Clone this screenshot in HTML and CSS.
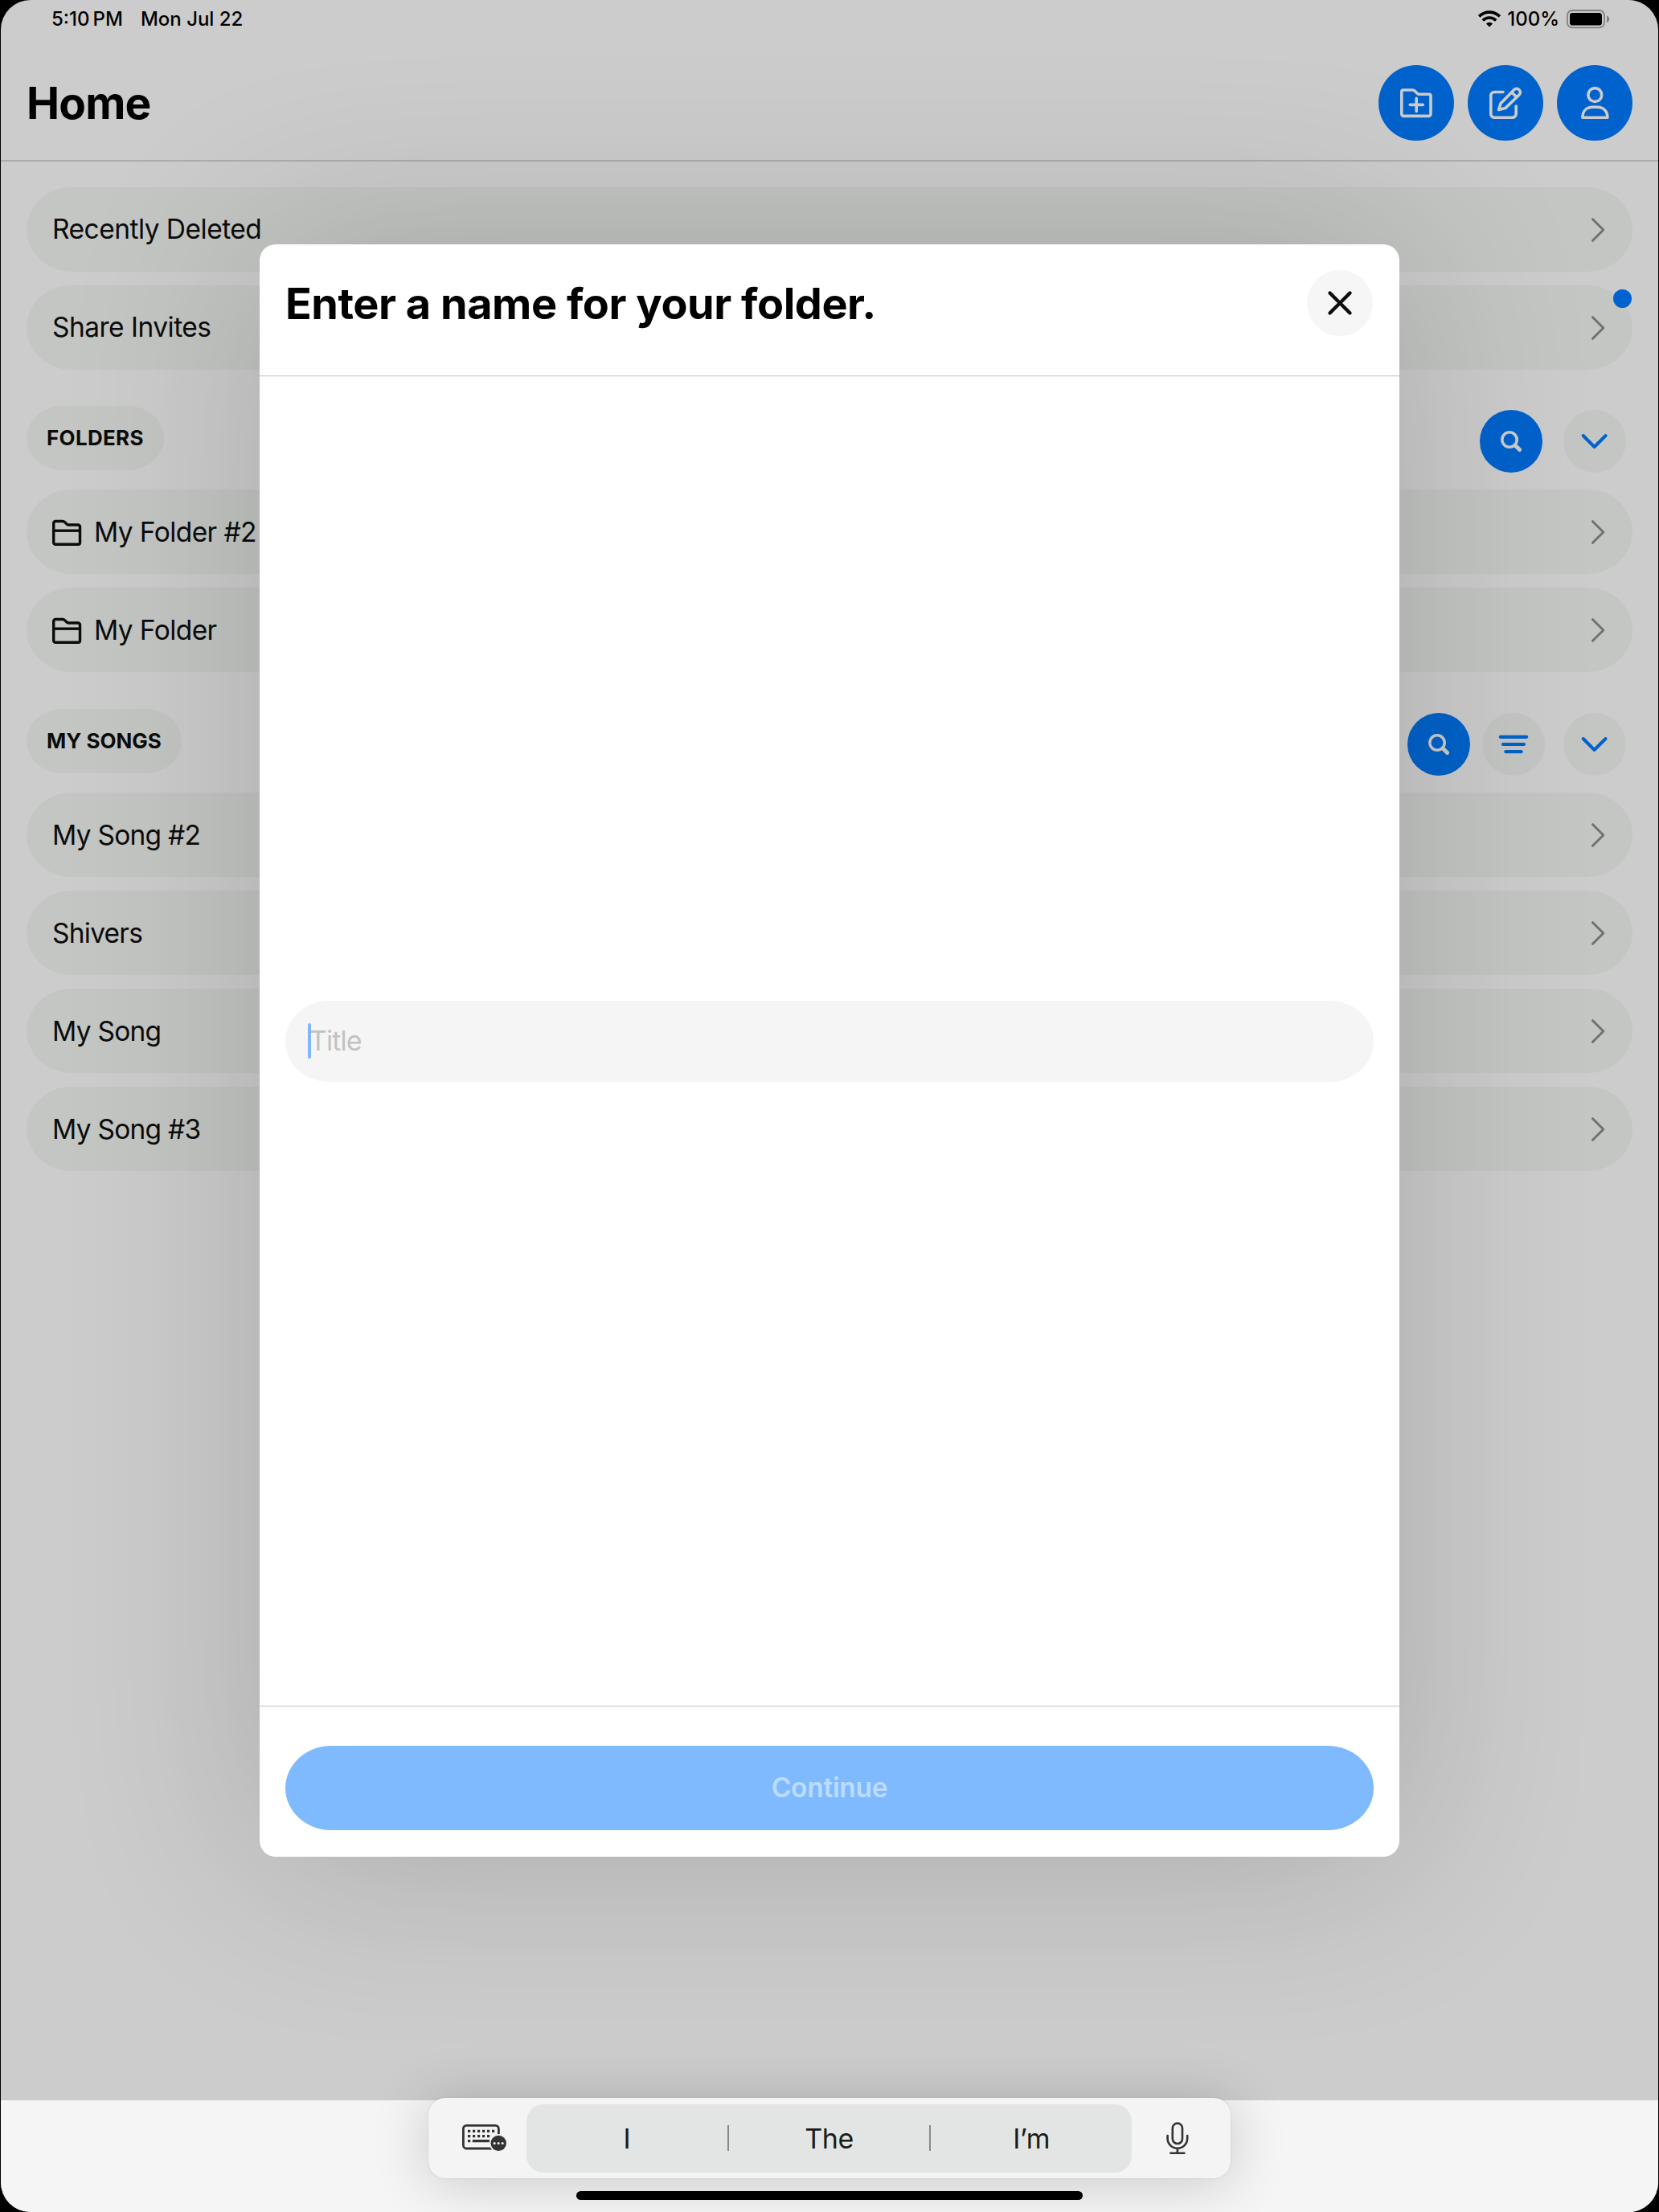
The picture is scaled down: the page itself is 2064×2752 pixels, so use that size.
FILE: index.html
```html
<!DOCTYPE html>
<html lang="en">
<head>
<meta charset="utf-8">
<title>Home</title>
<link rel="stylesheet" href="styles.css">
</head>
<body>
<svg class="defs" aria-hidden="true">
  <symbol id="chev" viewBox="0 0 20 34"><path d="M3.5 3.7 L16.8 17 L3.5 30.3" fill="none" stroke="#707175" stroke-width="3" stroke-linecap="round" stroke-linejoin="round"/></symbol>
  <symbol id="down" viewBox="0 0 78 78"><path d="M24.7 32 L38.6 46 L52.6 32" fill="none" stroke="#0062cc" stroke-width="4" stroke-linecap="round" stroke-linejoin="round"/></symbol>
  <symbol id="search" viewBox="0 0 78 78"><g fill="none" stroke="currentColor"><circle cx="37" cy="37" r="9.2" stroke-width="3.6"/><path d="M44.5 44.5 L49.6 49.6" stroke-width="5" stroke-linecap="round"/></g></symbol>
  <symbol id="folder" viewBox="0 0 38 34"><g fill="none" stroke="#0b0c0b" stroke-width="3.4" stroke-linejoin="round"><path d="M2.7 5 a2.5 2.5 0 0 1 2.5 -2.5 H14 q1.5 0 2.6 1.1 l2.2 2.2 q1 1.2 2.5 1.2 H33 a2.5 2.5 0 0 1 2.5 2.5 V29 a2.3 2.3 0 0 1 -2.3 2.3 H5 A2.3 2.3 0 0 1 2.7 29 Z"/><path d="M3 14.2 H35"/></g></symbol>
</svg>
<div class="screen">
  <div class="statusbar">
    <span class="clock">5:10<i class="thin"></i>PM</span><span class="date">Mon Jul 22</span>
    <svg class="wifi" viewBox="0 0 28 21"><g fill="none" stroke="#000" stroke-width="3.6"><path d="M1.2 7.4 A18.2 18.2 0 0 1 26.8 7.4"/><path d="M5.8 12.4 A11.6 11.6 0 0 1 22.2 12.4"/></g><path d="M14 20.4 L9.9 16.4 A5.8 5.8 0 0 1 18.1 16.4 Z"/></svg>
    <span class="percent">100%</span>
    <svg class="battery" viewBox="0 0 54 24"><rect x="1" y="1" width="46" height="21.4" rx="6" fill="none" stroke="#828282" stroke-width="1.8"/><rect x="4" y="4" width="40" height="15.6" rx="3.4"/><path d="M50 7.5 a5 4.6 0 0 1 0 8.6 Z" fill="#828282"/></svg>
  </div>
  <header class="topbar">
    <h1 class="home">Home</h1>
    <div class="tools">
      <span class="tool"><svg viewBox="0 0 94 94"><path d="M28.8 33 a2 2 0 0 1 2 -2 H42.5 q1.5 0 2.5 1 l3.3 3.2 q1 1 2.5 1 H63 a2 2 0 0 1 2 2 V61 a2.4 2.4 0 0 1 -2.4 2.4 H31.2 A2.4 2.4 0 0 1 28.8 61 Z M39.3 49.4 H55.3 M47.2 41.4 V57.4"/></svg></span>
      <span class="tool"><svg viewBox="0 0 94 94"><path d="M44 33.5 H33.3 a4.5 4.5 0 0 0 -4.5 4.5 V60.5 a4.8 4.8 0 0 0 4.8 4.8 H55.4 a4.8 4.8 0 0 0 4.8 -4.8 V51 M38.6 55.6 L41 47.8 L57.6 30.7 a4.5 4.5 0 0 1 6.4 6.4 L46.8 53.6 Z M54.8 33.8 L60.4 39.6"/></svg></span>
      <span class="tool"><svg viewBox="0 0 94 94"><circle cx="47.3" cy="37" r="8.4"/><path d="M31.9 65.2 C31.9 57 37 52.3 44.5 52.3 H50.2 C57.7 52.3 62.9 57 62.9 65.2 Z"/></svg></span>
    </div>
  </header>
  <main class="list">
    <div class="row"><span class="label">Recently Deleted</span><svg class="chev"><use href="#chev"/></svg></div>
    <div class="row"><span class="label">Share Invites</span><svg class="chev"><use href="#chev"/></svg><b class="dot"></b></div>
    <div class="section">
      <h2 class="pill pill-folders">FOLDERS</h2>
      <div class="actions"><span class="round blue"><svg><use href="#search"/></svg></span><span class="round wide"><svg><use href="#down"/></svg></span></div>
    </div>
    <div class="row"><svg class="folder"><use href="#folder"/></svg><span>My Folder #2</span><svg class="chev"><use href="#chev"/></svg></div>
    <div class="row"><svg class="folder"><use href="#folder"/></svg><span>My Folder</span><svg class="chev"><use href="#chev"/></svg></div>
    <div class="section songs">
      <h2 class="pill">MY SONGS</h2>
      <div class="actions"><span class="round blue"><svg><use href="#search"/></svg></span><span class="round sort"><svg viewBox="0 0 78 78"><path d="M22.8 29.8 H55.2 M26 39 H52 M29.4 48.2 H48.6" fill="none" stroke="#0062cc" stroke-width="4.2" stroke-linecap="round"/></svg></span><span class="round last"><svg><use href="#down"/></svg></span></div>
    </div>
    <div class="row song"><span>My Song #2</span><svg class="chev"><use href="#chev"/></svg></div>
    <div class="row song"><span>Shivers</span><svg class="chev"><use href="#chev"/></svg></div>
    <div class="row song"><span>My Song</span><svg class="chev"><use href="#chev"/></svg></div>
    <div class="row song"><span>My Song #3</span><svg class="chev"><use href="#chev"/></svg></div>
  </main>

  <section class="modal">
    <header class="modal-head">
      <h2 class="modal-title">Enter a name for your folder.</h2>
      <span class="close"><svg viewBox="0 0 82 82"><path d="M28.5 28.5 L53.5 53.5 M53.5 28.5 L28.5 53.5" stroke="#0b0c0b" stroke-width="4.4" stroke-linecap="round"/></svg></span>
    </header>
    <div class="modal-body"><div class="field"><i class="caret"></i><span class="placeholder">Title</span></div></div>
    <footer class="modal-foot"><div class="continue">Continue</div></footer>
  </section>

  <div class="keyboard">
    <div class="bar">
      <svg class="kbd" viewBox="0 0 56 36"><rect x="1.4" y="2.4" width="44" height="28.6" rx="4" fill="none" stroke="#333" stroke-width="2.8"/><path d="M7 9.4 H42 M7 15.6 H36" stroke="#333" stroke-width="3.4" stroke-dasharray="3.2 2.8"/><path d="M7 21.6 H10.2 M12.8 21.6 H34" stroke="#333" stroke-width="3.2"/><circle cx="45.2" cy="24.4" r="11.4" fill="#f3f3f3"/><circle cx="45.2" cy="24.4" r="9.7" fill="#333"/><g fill="#f3f3f3"><circle cx="40.2" cy="24.4" r="1.5"/><circle cx="45.2" cy="24.4" r="1.5"/><circle cx="50.2" cy="24.4" r="1.5"/></g></svg>
      <div class="words"><span class="word">I</span><i class="sep"></i><span class="word">The</span><i class="sep"></i><span class="word">I’m</span></div>
      <svg class="mic" viewBox="0 0 28 42"><g fill="none" stroke="#333" stroke-width="2.6" stroke-linecap="round"><rect x="7.8" y="1.6" width="12.2" height="25.4" rx="6.1"/><path d="M1.6 17 V20.5 a12.3 12.3 0 0 0 24.6 0 V17 M13.9 33 V38.6 M5.4 38.8 H22.4"/></g></svg>
    </div>
    <div class="indicator"></div>
  </div>
</div>
</body>
</html>
```
FILE: styles.css
```css
* { box-sizing: border-box; }
body { margin: 0; background: #000; font-family: Inter, "Liberation Sans", sans-serif; color: #0b0c0b; }
h1, h2 { margin: 0; }
svg { display: block; flex: none; }
.defs { position: absolute; width: 0; height: 0; }
.screen { position: relative; width: 2062px; height: 2752px; margin-left: 1px; border-radius: 37px; overflow: hidden; background: #ccc; }

.statusbar { display: flex; height: 47px; padding: 0 60px 0 63px; align-items: center; font-size: 24px; font-weight: 500; color: #000; }
.clock, .date, .percent { white-space: nowrap; }
.thin { display: inline-block; width: 4px; }
.date { margin-left: 22px; margin-right: auto; }
.wifi { width: 28px; height: 21px; margin-right: 8px; }
.percent { margin-right: 9px; }
.battery { width: 54px; height: 24px; }

.topbar { display: flex; height: 154px; padding: 34px 32px 24px; justify-content: space-between; border-bottom: 2px solid #adadad; }
.home { height: 94px; line-height: 95px; font-size: 55px; font-weight: 700; color: #000; letter-spacing: -.8px; }
.tools { display: flex; gap: 17px; }
.tool { width: 94px; height: 94px; border-radius: 50%; background: #0062cc; }
.tool svg { fill: none; stroke: #ccc; stroke-width: 3.6; stroke-linecap: round; stroke-linejoin: round; }

.list { display: flex; flex-direction: column; gap: 17px; padding: 32px; }
.row { position: relative; display: flex; height: 105px; padding: 0 33px 0 32px; align-items: center; border-radius: 56px / 52.5px; background: #c4c6c3; font-size: 33.5px; letter-spacing: -.6px; white-space: nowrap; }
.song { letter-spacing: -.75px; }
.label { padding-bottom: 1px; letter-spacing: -.52px; }
.chev { width: 20px; height: 34px; margin-left: auto; }
.folder { width: 38px; height: 34px; margin: 2px 15px 0 -1px; }
.dot { position: absolute; right: 1px; top: 5px; width: 23px; height: 23px; border-radius: 50%; background: #0062cc; }
.section { display: flex; height: 80px; margin: 28px 8px 7px 0; justify-content: space-between; }
.songs { margin-top: 29px; }
.pill { height: 80px; padding: 0 25px; line-height: 80px; border-radius: 45px / 40px; background: #c4c6c3; font-size: 26px; font-weight: 700; }
.pill-folders { letter-spacing: .3px; }
.actions { display: flex; padding-top: 5px; }
.round { width: 78px; height: 78px; border-radius: 50%; background: #c4c6c3; }
.round svg { width: 78px; height: 78px; }
.blue { background: #0062cc; color: #ccc; }
.wide { margin-left: 26px; }
.sort { margin-left: 15px; }
.last { margin-left: 23px; }

.modal { position: absolute; left: 322px; top: 304px; width: 1418px; height: 2006px; display: flex; flex-direction: column; border-radius: 20px; background: #fff; box-shadow: 0 0 240px rgba(0, 20, 0, .19); }
.modal-head { display: flex; height: 164px; padding: 32px 33px 32px 32px; justify-content: space-between; border-bottom: 1px solid #cfcfcf; box-shadow: 0 1px #f0f0f0; }
.modal-title { line-height: 84px; font-size: 54px; font-weight: 700; color: #000; letter-spacing: -.46px; white-space: nowrap; }
.close { width: 82px; height: 82px; border-radius: 50%; background: #f5f6f5; }
.modal-body { display: flex; flex: 1; padding: 0 32px; align-items: center; }
.field { display: flex; flex: 1; height: 101px; padding-left: 28px; align-items: center; border-radius: 55px / 50px; background: #f5f5f5; font-size: 33.5px; letter-spacing: -.7px; }
.caret { width: 4px; height: 44px; margin-right: -2px; border-radius: 2px; background: #7db8ff; }
.placeholder { color: #c2c2c2; }
.modal-foot { height: 188px; padding: 49px 32px 0; border-top: 1px solid #cfcfcf; box-shadow: inset 0 1px #f0f0f0; }
.continue { height: 105px; line-height: 104px; border-radius: 57px / 52.5px; background: #7fbaff; color: #bcdcff; font-size: 33.5px; font-weight: 600; letter-spacing: -.3px; text-align: center; }

.keyboard { position: absolute; left: 0; right: 0; bottom: 0; height: 139px; display: flex; flex-direction: column; align-items: center; background: #f5f5f5; }
.bar { display: flex; width: 998px; height: 100px; margin-top: -3px; padding: 0 52px 0 42px; align-items: center; border-radius: 21px; background: #f4f4f4; box-shadow: 0 4px 70px rgba(0, 0, 0, .19), 0 0 2px rgba(0, 0, 0, .16); }
.kbd { width: 56px; height: 36px; }
.words { display: flex; width: 754px; height: 85px; margin-left: 24px; margin-right: 43px; align-items: center; border-radius: 21px; background: #e3e5e4; font-size: 34px; color: #1b1b1b; }
.word { flex: 1; text-align: center; letter-spacing: -.4px; }
.sep { width: 2px; height: 32px; background: #88898b; }
.mic { width: 28px; height: 42px; margin-top: 2px; }
.indicator { width: 630px; height: 11px; margin-top: 16px; border-radius: 6px; background: #000; }
```
